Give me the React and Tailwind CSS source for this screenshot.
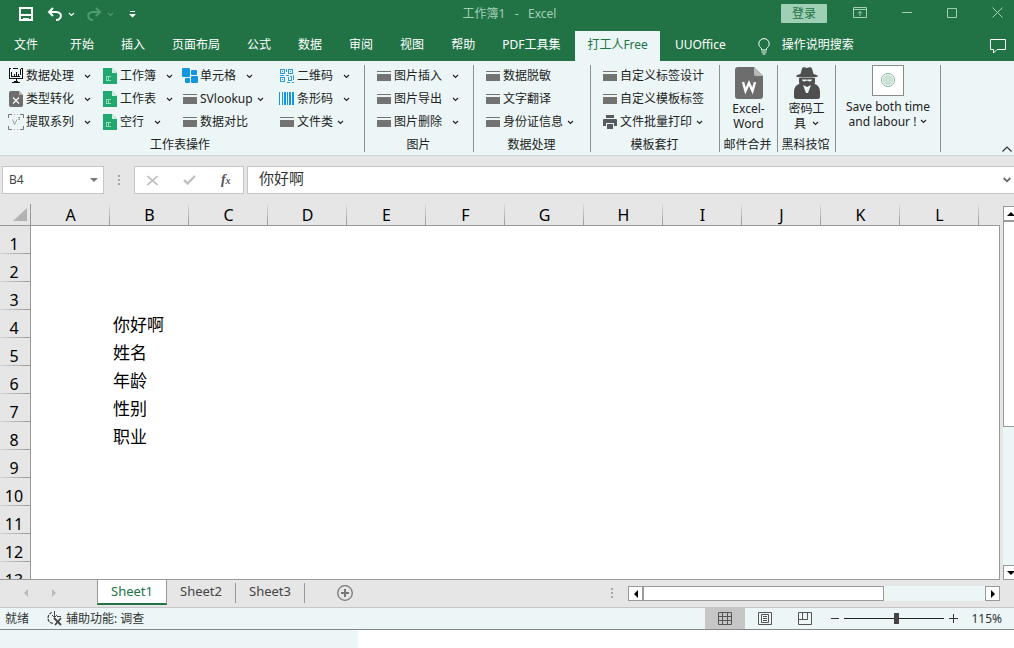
import React, { useState } from "react";
import clsx from "clsx";

const TABS = [
  "开始",
  "插入",
  "页面布局",
  "公式",
  "数据",
  "审阅",
  "视图",
  "帮助",
  "PDF工具集",
  "打工人Free",
  "UUOffice",
];

const COLUMNS = ["A", "B", "C", "D", "E", "F", "G", "H", "I", "J", "K", "L"];
const ROWS = [1, 2, 3, 4, 5, 6, 7, 8, 9, 10, 11, 12, 13];
const CELLS = { B4: "你好啊", B5: "姓名", B6: "年龄", B7: "性别", B8: "职业" };
const SHEETS = ["Sheet1", "Sheet2", "Sheet3"];

// menu: "split" leaves room before the arrow, "drop" keeps it close to the label
const GROUPS = [
  {
    label: "工作表操作",
    width: "w-[365px] pl-2",
    columns: [
      {
        width: "w-[94px]",
        items: [
          { icon: "monitor", text: "数据处理", menu: "split" },
          { icon: "convert", text: "类型转化", menu: "split" },
          { icon: "extract", text: "提取系列", menu: "split" },
        ],
      },
      {
        width: "w-[80px]",
        items: [
          { icon: "book", text: "工作簿", menu: "split" },
          { icon: "book", text: "工作表", menu: "split" },
          { icon: "book", text: "空行", menu: "split" },
        ],
      },
      {
        width: "w-[97px]",
        items: [
          { icon: "cells", text: "单元格", menu: "split" },
          { icon: "card", text: "SVlookup", menu: "drop" },
          { icon: "card", text: "数据对比" },
        ],
      },
      {
        width: "w-[80px]",
        items: [
          { icon: "qr", text: "二维码", menu: "split" },
          { icon: "barcode", text: "条形码", menu: "split" },
          { icon: "card", text: "文件类", menu: "drop" },
        ],
      },
    ],
  },
  {
    label: "图片",
    width: "w-[109px] pl-[11px]",
    columns: [
      {
        width: "w-[96px]",
        items: [
          { icon: "card", text: "图片插入", menu: "split" },
          { icon: "card", text: "图片导出", menu: "split" },
          { icon: "card", text: "图片删除", menu: "split" },
        ],
      },
    ],
  },
  {
    label: "数据处理",
    width: "w-[117px] pl-[11px]",
    columns: [
      {
        width: "w-[100px]",
        items: [
          { icon: "card", text: "数据脱敏" },
          { icon: "card", text: "文字翻译" },
          { icon: "card", text: "身份证信息", menu: "drop" },
        ],
      },
    ],
  },
  {
    label: "模板套打",
    width: "w-[129px] pl-[11px]",
    columns: [
      {
        width: "w-[110px]",
        items: [
          { icon: "card", text: "自定义标签设计" },
          { icon: "card", text: "自定义模板标签" },
          { icon: "printer", text: "文件批量打印", menu: "drop" },
        ],
      },
    ],
  },
];

const Chevron = ({ className }) => (
  <svg className={clsx("shrink-0", className)} width="7" height="5" viewBox="0 0 7 5">
    <path d="M1 1l2.500 2.500L6 1" fill="none" stroke="currentColor" strokeWidth="1.100" />
  </svg>
);

const Triangle = ({ points, size = 8, className }) => (
  <svg className={className} width={size} height={size} viewBox="0 0 8 8">
    <polygon points={points} fill="currentColor" />
  </svg>
);

const ICONS = {
  monitor: (
    <g fill="none" stroke="#111" shapeRendering="crispEdges">
      <path d="M3 .5H1.500V10.500H14.500V.5H13" />
      <path d="M3.500 4v5M6.500 6v3M8.500 4v5M10.500 6v3M12.500 1v6M3 8.500h9M5 .5h5" />
      <path d="M8 11v3M6 13.500h4M4 14.500h8" />
    </g>
  ),
  convert: (
    <g>
      <path d="M3 0h8l4 4v10a2 2 0 0 1-2 2H3a2 2 0 0 1-2-2V2a2 2 0 0 1 2-2z" fill="#6e6e6e" />
      <path d="M11 0v4h4z" fill="#b5b5b5" />
      <path d="M5 6.500l6 6M11 6.500l-6 6" stroke="#fff" strokeWidth="1.100" />
    </g>
  ),
  extract: (
    <g fill="none" stroke="#777">
      <path d="M.5 4V.5H4M12 .5h3.500V4M15.500 12v3.500H12M4 15.500H.5V12" />
      <path d="M6 .5h1M9 .5h1M6 15.500h1M9 15.500h1" stroke="#aaa" />
      <path d="M4.500 5.500l2 5 2.500-5M10 3.500h2l-1.500 2H12" stroke="#a3a3a3" />
    </g>
  ),
  book: (
    <g>
      <path d="M1 0h9l5 5v11H1z" fill="#21a870" />
      <path d="M10 0v5h5z" fill="#d3f0e4" />
      <path d="M4 8.500h5M4.500 8v5M4 12.500h5M6.500 8.500v4" stroke="#8fdcbb" fill="none" />
    </g>
  ),
  cells: (
    <g fill="#1495e0">
      <rect x="0" y="0" width="8" height="9" rx="1" />
      <rect x="9" y="2" width="6" height="5" rx="1" />
      <rect x="3" y="10" width="5" height="5" rx="1" />
      <rect x="9" y="8" width="7" height="7" rx="1" />
    </g>
  ),
  card: (
    <g fill="#737373" shapeRendering="crispEdges">
      <rect x="1" y="3" width="14" height="1" />
      <rect x="1" y="6" width="14" height="7" />
    </g>
  ),
  qr: (
    <g shapeRendering="crispEdges">
      <g fill="none" stroke="#2b9bdc">
        <path d="M1.500 1.500h4v4h-4zM9.500 1.500h4v4h-4zM1.500 9.500h4v4h-4z" />
        <path d="M7.500 1v3M7 7.500h3M1 7.500h4M9.500 9v3h3v-3M14.500 7v5M8 14.500h3M13 14.500h2M11 8.500h2" />
      </g>
      <path d="M3 3h1v1H3zM11 3h1v1h-1zM3 11h1v1H3z" fill="#2b9bdc" />
    </g>
  ),
  barcode: (
    <path
      d="M0 1h1v13H0zM3 1h1v13H3zM5 1h2v13H5zM8 1h1v13H8zM10 1h2v13h-2zM13 1h2v13h-2z"
      fill="#1495e0"
      shapeRendering="crispEdges"
    />
  ),
  printer: (
    <g fill="#555b5e">
      <rect x="4" y="1" width="8" height="3" />
      <path d="M2 5h12a1 1 0 0 1 1 1v6h-3V9H4v3H1V6a1 1 0 0 1 1-1z" />
      <rect x="5" y="10" width="6" height="5" />
    </g>
  ),
};

const Command = ({ icon, text, menu }) => (
  <button className="flex h-5 items-center whitespace-nowrap">
    <svg className="mr-[2px] shrink-0" width="16" height="16" viewBox="0 0 16 16">
      {ICONS[icon]}
    </svg>
    <span>{text}</span>
    {menu && <Chevron className={menu === "split" ? "ml-[10px]" : "ml-1"} />}
  </button>
);

const RibbonGroup = ({ group }) => (
  <section className={clsx("flex shrink-0 flex-col border-r border-[#8f8f8f] pt-px", group.width)}>
    <div className="flex">
      {group.columns.map((column, i) => (
        <div key={i} className={clsx("flex flex-col gap-[3px]", column.width)}>
          {column.items.map((item) => (
            <Command key={item.text} {...item} />
          ))}
        </div>
      ))}
    </div>
    <div className="mt-auto pr-3 text-center leading-[14px]">{group.label}</div>
  </section>
);

const BigGroup = ({ width, label, children }) => (
  <section className={clsx("flex shrink-0 flex-col border-r border-[#8f8f8f]", width)}>
    <button className="flex flex-col items-center leading-[15px]">{children}</button>
    <div className="mt-auto pr-[2px] text-center leading-[14px] whitespace-nowrap">{label}</div>
  </section>
);

const TitleBar = () => (
  <header className="flex h-[31px] items-start bg-[#217346] text-white">
    <div className="flex h-7 flex-1 items-center pl-[19px]">
      <button aria-label="保存">
        <svg width="14" height="14" viewBox="0 0 14 14" fill="none" stroke="#fff" shapeRendering="crispEdges">
          <path d="M1 1h12v12H1z" strokeWidth="2" />
          <path d="M2 8h10" strokeWidth="2" />
          <path d="M4.500 14v-3h5v3" strokeWidth="1" />
        </svg>
      </button>
      <button aria-label="撤消" className="ml-[14px] flex items-center gap-[5px]">
        <svg width="16" height="14" viewBox="0 0 16 14" fill="none" stroke="#fff" strokeWidth="2">
          <path d="M6 1L2 5l4 4M2 5h7c7 0 6 8 0 8" />
        </svg>
        <Chevron />
      </button>
      <button aria-label="恢复" className="ml-[11px] flex items-center gap-[5px] text-[#4f9a72]">
        <svg width="16" height="14" viewBox="0 0 16 14" fill="none" stroke="#4f9a72" strokeWidth="2">
          <path d="M10 1l4 4-4 4M14 5H7c-7 0-6 8 0 8" />
        </svg>
        <Chevron />
      </button>
      <button aria-label="自定义快速访问工具栏" className="ml-[15px]">
        <svg width="7" height="7" viewBox="0 0 7 7" fill="#fff">
          <path d="M1 0h5v1H1zM0 3h7L3.500 6.500z" />
        </svg>
      </button>
    </div>
    <h1 className="h-7 pr-[14px] leading-7 whitespace-pre text-[#a3cfb5]">工作簿1   -   Excel</h1>
    <div className="flex flex-1 justify-end pt-1">
      <button className="h-[19px] w-[46px] rounded-[1px] bg-[#9fd0b5] leading-[19px] text-[#217346]">登录</button>
      <div className="ml-[26px] flex gap-[35px] pt-[3px] pr-[11px]">
        <button aria-label="功能区显示选项" className="h-[11px]">
          <svg width="14" height="11" viewBox="0 0 14 11" fill="none" stroke="#a3cfb5">
            <path d="M.5.5h13v10H.5zM.5 2.500h13M7 9V4.500M5 6.500l2-2 2 2" />
          </svg>
        </button>
        <button aria-label="最小化" className="h-[11px]">
          <svg width="10" height="10" viewBox="0 0 10 10" stroke="#a3cfb5">
            <path d="M0 4.500h10" />
          </svg>
        </button>
        <button aria-label="最大化" className="h-[11px]">
          <svg width="10" height="10" viewBox="0 0 10 10" fill="none" stroke="#a3cfb5">
            <path d="M.5.5h9v9h-9z" />
          </svg>
        </button>
        <button aria-label="关闭" className="h-[11px]">
          <svg width="11" height="11" viewBox="0 0 11 11" stroke="#a3cfb5">
            <path d="M.5.5l10 10M10.500.5l-10 10" />
          </svg>
        </button>
      </div>
    </div>
  </header>
);

const RibbonTabs = ({ active, onSelect }) => (
  <nav className="flex h-[30px] bg-[#217346] text-white">
    <button className="mr-[5px] ml-[2px] px-3 pb-[2px]">文件</button>
    <div className="mr-5 flex gap-[3px] pl-[3px]">
      {TABS.map((tab) => (
        <button
          key={tab}
          onClick={() => onSelect(tab)}
          className={clsx("px-3 pb-[2px] whitespace-nowrap", tab === active && "bg-[#ecf6f7] text-[#217346]")}
        >
          {tab}
        </button>
      ))}
    </div>
    <button className="flex items-center gap-3 whitespace-nowrap">
      <svg width="12" height="17" viewBox="0 0 12 17" fill="none" stroke="#fff">
        <path d="M3.500 12V10.500C2 9 .8 8 .8 5.800a5.200 5.200 0 0 1 10.400 0C11.200 8 10 9 8.500 10.500V12zM3.500 14h5M4.500 16h3" />
      </svg>
      <span className="pb-[2px]">操作说明搜索</span>
    </button>
    <button aria-label="批注" className="mr-2 ml-auto">
      <svg width="16" height="15" viewBox="0 0 16 15" fill="none" stroke="#fff">
        <path d="M.5.5h15v10H7L3.500 14v-3.500h-3z" />
      </svg>
    </button>
  </nav>
);

const Ribbon = () => (
  <div className="flex border-b border-[#cfd3d3] bg-[#ecf6f7] pt-1 pb-[3px] text-[#222]">
    <div className="flex h-[87px]">
      {GROUPS.map((group, i) => (
        <RibbonGroup key={i} group={group} />
      ))}
      <BigGroup width="w-[58px]" label="邮件合并">
        <svg className="mt-[2px] mb-[2px]" width="28" height="32" viewBox="0 0 28 32">
          <path d="M3 0h16l9 9v20a3 3 0 0 1-3 3H3a3 3 0 0 1-3-3V3a3 3 0 0 1 3-3z" fill="#6d6d6d" />
          <path d="M19 0v7a2 2 0 0 0 2 2h7z" fill="#b9b9b9" />
          <path d="M8 15l2.500 9L14 16l3.500 8L20 15" fill="none" stroke="#fff" strokeWidth="2.400" />
        </svg>
        <span>Excel-</span>
        <span>Word</span>
      </BigGroup>
      <BigGroup width="w-[58px]" label="黑科技馆">
        <svg className="mt-[2px] mb-[2px]" width="28" height="32" viewBox="0 0 28 32" fill="#4f4f4f">
          <path d="M9 1.500c1-2 3-1.500 5-.5 2-1 4-1.500 5 .5l1.500 5.500c2.500.5 4.500 1.500 4.500 2.200C25 11 3 11 3 9.200 3 8.500 5 7.500 7.500 7z" />
          <path d="M6 11h16v4c0 4-4 6-8 6s-8-2-8-6z" />
          <path d="M1 25c0-5 3-8 6-8l7 5 7-5c3 0 6 3 6 8v5c0 1-1 2-2 2H3c-1 0-2-1-2-2z" />
          <path d="M9 12.500h4.500l.5.500.5-.5H19c0 2-3 2.500-4 1.200h-2c-1 1.300-4 .8-4-1.200z" fill="#ecf6f7" />
          <path d="M10 18l4 2 4-2-3 8h-2z" fill="#ecf6f7" />
        </svg>
        <span>密码工</span>
        <span className="flex items-center gap-[6px]">
          具 <Chevron />
        </span>
      </BigGroup>
      <BigGroup width="w-[105px]" label="">
        <svg className="mb-[3px]" width="32" height="31" viewBox="0 0 32 31">
          <rect x=".5" y=".5" width="31" height="30" fill="#fff" stroke="#8a8a8a" />
          <circle cx="16" cy="15" r="6.500" fill="#fff" stroke="#7fb59c" />
          <circle cx="16" cy="15" r="5.300" fill="#c9e2d3" />
        </svg>
        <span className="whitespace-nowrap">Save both time</span>
        <span className="flex items-center gap-1 whitespace-nowrap">
          and labour ! <Chevron />
        </span>
      </BigGroup>
    </div>
    <button aria-label="折叠功能区" className="mr-[2px] ml-auto self-end">
      <svg width="10" height="6" viewBox="0 0 10 6" fill="none" stroke="#333" strokeWidth="1.200">
        <path d="M.5 5.500L5 1l4.500 4.500" />
      </svg>
    </button>
  </div>
);

const Dots = () => (
  <svg width="2" height="11" viewBox="0 0 2 11" fill="#a8a8a8">
    <path d="M0 0h2v2H0zM0 4h2v2H0zM0 8h2v2H0z" />
  </svg>
);

const FormulaBar = () => (
  <div className="flex items-center bg-[#e6e6e6] py-[10px] pl-[2px]">
    <div className="flex h-7 w-[102px] items-center border border-[#c6c6c6] bg-white pr-[5px]">
      <input aria-label="名称框" defaultValue="B4" className="w-0 flex-1 pl-[6px] text-[#444] outline-none" />
      <button aria-label="选择名称">
        <Triangle points="0,2 8,2 4,6" className="text-[#777]" />
      </button>
    </div>
    <div className="flex w-[30px] justify-center">
      <Dots />
    </div>
    <div className="flex h-7 w-[110px] items-center justify-around border border-[#c6c6c6] bg-white">
      <button aria-label="取消">
        <svg width="11" height="11" viewBox="0 0 11 11" stroke="#bdbdbd" strokeWidth="1.600">
          <path d="M.5 1l10 9M10.500 1L.5 10" />
        </svg>
      </button>
      <button aria-label="输入">
        <svg width="13" height="10" viewBox="0 0 13 10" fill="none" stroke="#bdbdbd" strokeWidth="2.200">
          <path d="M1 5l3.500 3.500L12 1" />
        </svg>
      </button>
      <button
        aria-label="插入函数"
        className="font-['Liberation_Serif',serif] text-sm leading-none font-bold text-[#555] italic"
      >
        f<span className="text-[10px]">x</span>
      </button>
    </div>
    <div className="ml-[3px] flex h-7 flex-1 items-center border border-r-0 border-[#c6c6c6] bg-white pr-[3px]">
      <input
        aria-label="编辑栏"
        defaultValue="你好啊"
        className="w-0 flex-1 pb-1 pl-[11px] text-[15px] text-[#333] outline-none"
      />
      <button aria-label="展开编辑栏" className="text-[#666]">
        <svg width="8" height="6" viewBox="0 0 8 6" fill="none" stroke="currentColor" strokeWidth="1.800">
          <path d="M.7 1L4 4.300 7.300 1" />
        </svg>
      </button>
    </div>
  </div>
);

const Grid = () => (
  <div className="flex min-h-0 flex-1 bg-[#e6e6e6]">
    <div className="min-w-0 flex-1 overflow-hidden border-b border-[#999]">
      <table className="w-full table-fixed border-separate border-spacing-0 text-base leading-5">
        <colgroup>
          <col className="w-[31px]" />
          {COLUMNS.map((c) => (
            <col key={c} className="w-[79px]" />
          ))}
          <col />
        </colgroup>
        <thead>
          <tr className="h-[22px]">
            <th className="border-r border-b border-[#999] p-0">
              <svg className="ml-[13px]" width="14" height="13" viewBox="0 0 14 13">
                <path d="M14 0v13H0z" fill="#b3b3b3" />
              </svg>
            </th>
            {COLUMNS.map((c) => (
              <th
                key={c}
                className="border-b border-[#999] bg-[linear-gradient(#dcdcdc,#999999)] bg-[length:1px_100%] bg-right bg-no-repeat p-0 pt-[2px] leading-[19px] font-normal"
              >
                {c}
              </th>
            ))}
            <th className="border-b border-[#999] p-0"></th>
          </tr>
        </thead>
        <tbody>
          {ROWS.map((row) => (
            <tr key={row} className="h-7">
              <th className="border-r border-[#999] bg-[linear-gradient(to_right,#d4d4d4,#999999)] bg-[length:100%_1px] bg-bottom bg-no-repeat p-0 pt-2 pr-[2px] font-normal">
                {row}
              </th>
              {COLUMNS.map((c) => (
                <td key={c} className="bg-white p-0 pt-[2px] pl-[3px] text-[17px] whitespace-nowrap">
                  {CELLS[c + row]}
                </td>
              ))}
              <td className="border-r border-[#999] bg-white"></td>
            </tr>
          ))}
        </tbody>
      </table>
    </div>
    <div className="mt-[2px] ml-[3px] w-[11px] overflow-hidden">
      <div className="flex h-full w-[15px] flex-col bg-[#ecf6f7]">
        <button aria-label="向上滚动" className="flex h-[15px] items-center justify-center border border-[#999] bg-white">
          <Triangle points="0,6 8,6 4,2" />
        </button>
        <div className="h-[206px] border border-[#999] bg-white"></div>
        <button
          aria-label="向下滚动"
          className="mt-auto flex h-[15px] items-center justify-center border border-[#999] bg-white"
        >
          <Triangle points="0,2 8,2 4,6" />
        </button>
      </div>
    </div>
  </div>
);

const SheetBar = ({ active, onSelect }) => (
  <div className="flex h-7 items-start border-b border-[#c6c6c6] bg-[#e6e6e6] text-[#444]">
    <div className="flex h-[26px] w-[97px] items-center gap-5 pl-[22px] text-[#bbb]">
      <button aria-label="上一张工作表">
        <Triangle points="6,0 6,8 2,4" />
      </button>
      <button aria-label="下一张工作表">
        <Triangle points="2,0 2,8 6,4" />
      </button>
    </div>
    {SHEETS.map((sheet) => (
      <button
        key={sheet}
        onClick={() => onSelect(sheet)}
        className={clsx(
          "flex h-[25px] justify-center text-[13px] leading-[23px]",
          sheet === active
            ? "w-[70px] border-x border-b-2 border-x-[#999] border-b-[#217346] bg-white text-[#217346]"
            : "w-[69px]"
        )}
      >
        {sheet === active ? (
          sheet
        ) : (
          <span className="mt-[3px] h-5 w-full border-r border-[#999] leading-[17px]">{sheet}</span>
        )}
      </button>
    ))}
    <button aria-label="新工作表" className="mt-[5px] ml-8">
      <svg width="16" height="16" viewBox="0 0 16 16" fill="none" stroke="#777">
        <circle cx="8" cy="8" r="7.300" strokeWidth="1.300" />
        <path d="M8 4v8M4 8h8" strokeWidth="2" />
      </svg>
    </button>
    <div className="mt-2 mr-[15px] ml-auto">
      <Dots />
    </div>
    <div className="mt-[6px] mr-[14px] flex h-[15px] w-[372px] bg-[#ecf6f7] text-black">
      <button aria-label="向左滚动" className="flex w-[15px] items-center justify-center border border-[#999] bg-white">
        <Triangle points="6,0 6,8 2,4" />
      </button>
      <div className="w-[241px] border border-[#999] bg-white"></div>
      <button
        aria-label="向右滚动"
        className="ml-auto flex w-[15px] items-center justify-center border border-[#999] bg-white"
      >
        <Triangle points="2,0 2,8 6,4" />
      </button>
    </div>
  </div>
);

const StatusBar = () => {
  const [zoom, setZoom] = useState(53);

  return (
    <footer className="flex h-[22px] items-center border-b border-[#85858a] bg-[#ecf6f7] text-[#333]">
      <span className="pl-[5px]">就绪</span>
      <button className="ml-[18px] flex items-center gap-[3px]">
        <svg width="16" height="16" viewBox="0 0 16 16" fill="none" stroke="#444">
          <path d="M5 1.500A6 6 0 0 0 1 7c0 3 2 5 5 5.500" strokeDasharray="3 1" strokeWidth="1.300" />
          <path d="M7.500 0v6M5 4l2.500 2.500L10 4M10 5.500h4" />
          <path d="M7 7l7 7M14 7l-6 7" strokeWidth="1.800" />
        </svg>
        辅助功能: 调查
      </button>
      <div className="ml-auto flex h-full">
        <button aria-label="普通" className="flex w-10 items-center justify-center bg-[#c6c6c6]">
          <svg width="14" height="13" viewBox="0 0 14 13" fill="none" stroke="#555">
            <path d="M.5.5h13v12H.5zM.5 4.500h13M.5 8.500h13M4.500.5v12M9.500.5v12" />
          </svg>
        </button>
        <button aria-label="页面布局" className="flex w-10 items-center justify-center">
          <svg width="14" height="13" viewBox="0 0 14 13" fill="none" stroke="#555">
            <path d="M.5.5h13v12H.5zM3.500 2.500h7v8h-7zM5 4.500h4M5 6.500h4M5 8.500h4" />
          </svg>
        </button>
        <button aria-label="分页预览" className="flex w-10 items-center justify-center">
          <svg width="14" height="13" viewBox="0 0 14 13" fill="none" stroke="#555">
            <path d="M.5.5h13v12H.5zM4.500.5v7h5v-7M.5 7.500h9" />
          </svg>
        </button>
      </div>
      <button aria-label="缩小" className="ml-[6px]">
        <svg width="8" height="9" viewBox="0 0 8 9" stroke="#333">
          <path d="M0 4.500h8" />
        </svg>
      </button>
      <input
        type="range"
        aria-label="缩放"
        value={zoom}
        onChange={(e) => setZoom(Number(e.target.value))}
        className="mx-[5px] h-[11px] w-[100px] appearance-none bg-[linear-gradient(#222222,#222222)] bg-[length:100%_1px] bg-center bg-no-repeat [&::-webkit-slider-thumb]:h-[11px] [&::-webkit-slider-thumb]:w-[5px] [&::-webkit-slider-thumb]:appearance-none [&::-webkit-slider-thumb]:bg-[#444]"
      />
      <button aria-label="放大">
        <svg width="9" height="9" viewBox="0 0 9 9" stroke="#333">
          <path d="M0 4.500h9M4.500 0v9" />
        </svg>
      </button>
      <span className="mr-3 ml-3 w-8 text-right">115%</span>
    </footer>
  );
};

const App = () => {
  const [activeTab, setActiveTab] = useState("打工人Free");
  const [activeSheet, setActiveSheet] = useState("Sheet1");

  return (
    <div className="flex h-screen flex-col overflow-hidden bg-white font-['Noto_Sans','Noto_Sans_CJK_SC',sans-serif] text-xs text-black">
      <TitleBar />
      <RibbonTabs active={activeTab} onSelect={setActiveTab} />
      <Ribbon />
      <FormulaBar />
      <Grid />
      <SheetBar active={activeSheet} onSelect={setActiveSheet} />
      <StatusBar />
      <div className="h-[18px] w-[358px] bg-[#ecf6f7]"></div>
    </div>
  );
};

export default App;
